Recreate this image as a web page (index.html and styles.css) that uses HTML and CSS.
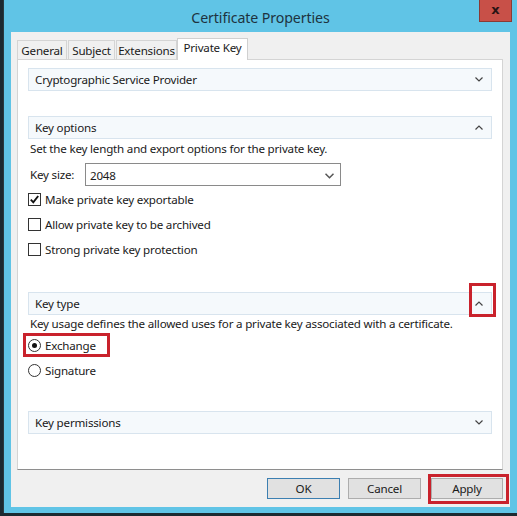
FILE: index.html
```html
<!DOCTYPE html>
<html>
<head>
<meta charset="utf-8">
<link rel="stylesheet" href="styles.css">
</head>
<body>
<div class="window">
  <div class="titlebar">
    <div class="title">Certificate Properties</div>
    <div class="close">x</div>
  </div>
  <div class="client">
    <div class="tabs">
      <div class="tab t-general">General</div>
      <div class="tab t-subject">Subject</div>
      <div class="tab t-ext">Extensions</div>
      <div class="tab t-pk active">Private Key</div>
    </div>
    <div class="panel">
      <div class="hdr hdr-csp"><span>Cryptographic Service Provider</span><svg class="chev" width="8" height="5" viewBox="0 0 8 5"><path d="M0.5 0.5 L4 4 L7.5 0.5" fill="none" stroke="#444" stroke-width="1.2"/></svg></div>

      <div class="hdr hdr-opts"><span>Key options</span><svg class="chev" width="8" height="5" viewBox="0 0 8 5"><path d="M0.5 4.5 L4 1 L7.5 4.5" fill="none" stroke="#444" stroke-width="1.2"/></svg></div>
      <div class="desc">Set the key length and export options for the private key.</div>
      <div class="size-row">
        <span class="size-label">Key size:</span>
        <div class="select"><span>2048</span><svg width="9" height="6" viewBox="0 0 9 6"><path d="M0.5 0.8 L4.5 4.8 L8.5 0.8" fill="none" stroke="#555" stroke-width="1.5"/></svg></div>
      </div>
      <div class="check-row first"><span class="cbox"><svg width="11" height="11" viewBox="0 0 11 11"><path d="M1.8 5.6 L4.3 8.3 L9.2 2" fill="none" stroke="#111" stroke-width="1.9"/></svg></span><span>Make private key exportable</span></div>
      <div class="check-row"><span class="cbox"></span><span>Allow private key to be archived</span></div>
      <div class="check-row"><span class="cbox"></span><span>Strong private key protection</span></div>

      <div class="hdr hdr-type"><span>Key type</span><svg class="chev" width="8" height="5" viewBox="0 0 8 5"><path d="M0.5 4.5 L4 1 L7.5 4.5" fill="none" stroke="#444" stroke-width="1.2"/></svg>
        <div class="mark mark-chev"></div>
      </div>
      <div class="desc desc-type">Key usage defines the allowed uses for a private key associated with a certificate.</div>
      <div class="radio-row first"><span class="radio on"></span><span>Exchange</span><div class="mark mark-exch"></div></div>
      <div class="radio-row"><span class="radio"></span><span>Signature</span></div>

      <div class="hdr hdr-perm"><span>Key permissions</span><svg class="chev" width="8" height="5" viewBox="0 0 8 5"><path d="M0.5 0.5 L4 4 L7.5 0.5" fill="none" stroke="#444" stroke-width="1.2"/></svg></div>
    </div>
    <div class="buttons">
      <div class="btn default">OK</div>
      <div class="btn">Cancel</div>
      <div class="btn apply">Apply<div class="mark mark-apply"></div></div>
    </div>
  </div>
</div>
</body>
</html>
```

FILE: styles.css
```css
html, body {
  margin: 0;
  padding: 0;
}
body {
  width: 517px;
  height: 516px;
  overflow: hidden;
  background: #1c2a31;
  font-family: "Noto Sans", "DejaVu Sans", sans-serif;
  font-size: 11.6px;
  letter-spacing: -0.2px;
  color: #1a1a1a;
}
.window {
  margin-left: 3px;
  width: 514px;
  height: 513px;
  background: #60c4e6;
  display: flex;
  flex-direction: column;
  border-left: 1px solid #2a3a40;
  box-sizing: border-box;
}
.titlebar {
  height: 32px;
  position: relative;
  display: flex;
  align-items: center;
  justify-content: center;
}
.title {
  font-size: 14.2px;
  letter-spacing: -0.1px;
  color: #1e3340;
  margin-top: 2px;
}
.close {
  position: absolute;
  right: 5px;
  top: 0;
  width: 33px;
  height: 22px;
  background: #c85048;
  border: 1px solid #8a3a34;
  border-top: none;
  box-sizing: border-box;
  color: #2a1414;
  font-weight: bold;
  font-family: "DejaVu Sans", sans-serif;
  font-size: 13px;
  letter-spacing: 0;
  display: flex;
  align-items: center;
  justify-content: center;
  line-height: 1;
  padding-bottom: 2px;
}
.client {
  margin: 0 7px 0 7px;
  height: 475px;
  background: #f0f0f0;
  display: flex;
  flex-direction: column;
  padding: 0 6px 0 6px;
  box-sizing: border-box;
}
.tabs {
  display: flex;
  align-items: flex-end;
  height: 28px;
  position: relative;
  z-index: 2;
}
.tab {
  height: 19px;
  border: 1px solid #d4d4d4;
  border-bottom: none;
  background: #f0f0f0;
  display: flex;
  align-items: center;
  justify-content: center;
  box-sizing: border-box;
  margin-bottom: 1px;
  color: #1a1a1a;
  padding-top: 1px;
}
.t-general { width: 50px; }
.t-subject { width: 47px; margin-left: 1px; }
.t-ext { width: 61px; margin-left: 1px; }
.t-pk { width: 71px; }
.tab.active {
  height: 22px;
  background: #fff;
  border-color: #d0d0d0;
  margin-bottom: 0;
  padding-top: 0;
  padding-bottom: 4px;
}
.panel {
  height: 411px;
  background: #fff;
  border: 1px solid #d4d4d4;
  border-bottom-color: #8e8e8e;
  margin-top: -1px;
  margin-right: 1px;
  box-sizing: border-box;
  padding: 8px 10px 0 10px;
  display: flex;
  flex-direction: column;
}
.hdr {
  height: 23px;
  background: #f5f9fc;
  border: 1px solid #d8e4ee;
  box-sizing: border-box;
  display: flex;
  align-items: center;
  justify-content: space-between;
  padding: 0 8px 0 6px;
  position: relative;
  flex: none;
}
.hdr-opts { margin-top: 25px; }
.hdr-type { margin-top: 30px; }
.hdr-perm { margin-top: 28px; }
.desc {
  margin-left: 2px;
  height: 17px;
  line-height: 17px;
  margin-top: 1px;
}
.desc-type { margin-top: 0; }
.size-row {
  display: flex;
  align-items: center;
  margin-top: 6px;
  margin-left: 2px;
}
.size-label {
  width: 55px;
}
.select {
  width: 256px;
  height: 23px;
  border: 1px solid #8a8a8a;
  box-sizing: border-box;
  display: flex;
  align-items: center;
  justify-content: space-between;
  padding: 2px 6px 0 4px;
}
.check-row, .radio-row {
  display: flex;
  align-items: center;
  height: 25px;
  gap: 4px;
  position: relative;
}
.check-row.first { margin-top: 1px; }
.cbox {
  width: 13px;
  height: 13px;
  border: 1px solid #333;
  box-sizing: border-box;
  display: flex;
  align-items: center;
  justify-content: center;
  background: #fff;
}
.radio-row.first { margin-top: 1px; }
.radio {
  width: 13px;
  height: 13px;
  border: 1px solid #333;
  border-radius: 50%;
  box-sizing: border-box;
  display: flex;
  align-items: center;
  justify-content: center;
}
.radio.on::after {
  content: "";
  width: 5px;
  height: 5px;
  border-radius: 50%;
  background: #111;
}
.buttons {
  display: flex;
  justify-content: flex-end;
  gap: 8px;
  padding: 8px 1px 0 0;
}
.btn {
  width: 73px;
  height: 21px;
  background: #e1e1e1;
  border: 1px solid #adadad;
  box-sizing: border-box;
  display: flex;
  align-items: center;
  justify-content: center;
  position: relative;
}
.btn.default {
  border-color: #3c7fb1;
}
.btn.apply { margin-left: 2px; width: 72px; }
.mark {
  position: absolute;
  border: 3px solid #c9222c;
  box-sizing: border-box;
}
.mark-chev {
  right: -5px;
  top: -10px;
  width: 27px;
  height: 34px;
}
.mark-exch {
  left: -5px;
  top: 0px;
  width: 87px;
  height: 24px;
}
.mark-apply {
  left: -4px;
  top: -5px;
  width: 81px;
  height: 30px;
}
```
